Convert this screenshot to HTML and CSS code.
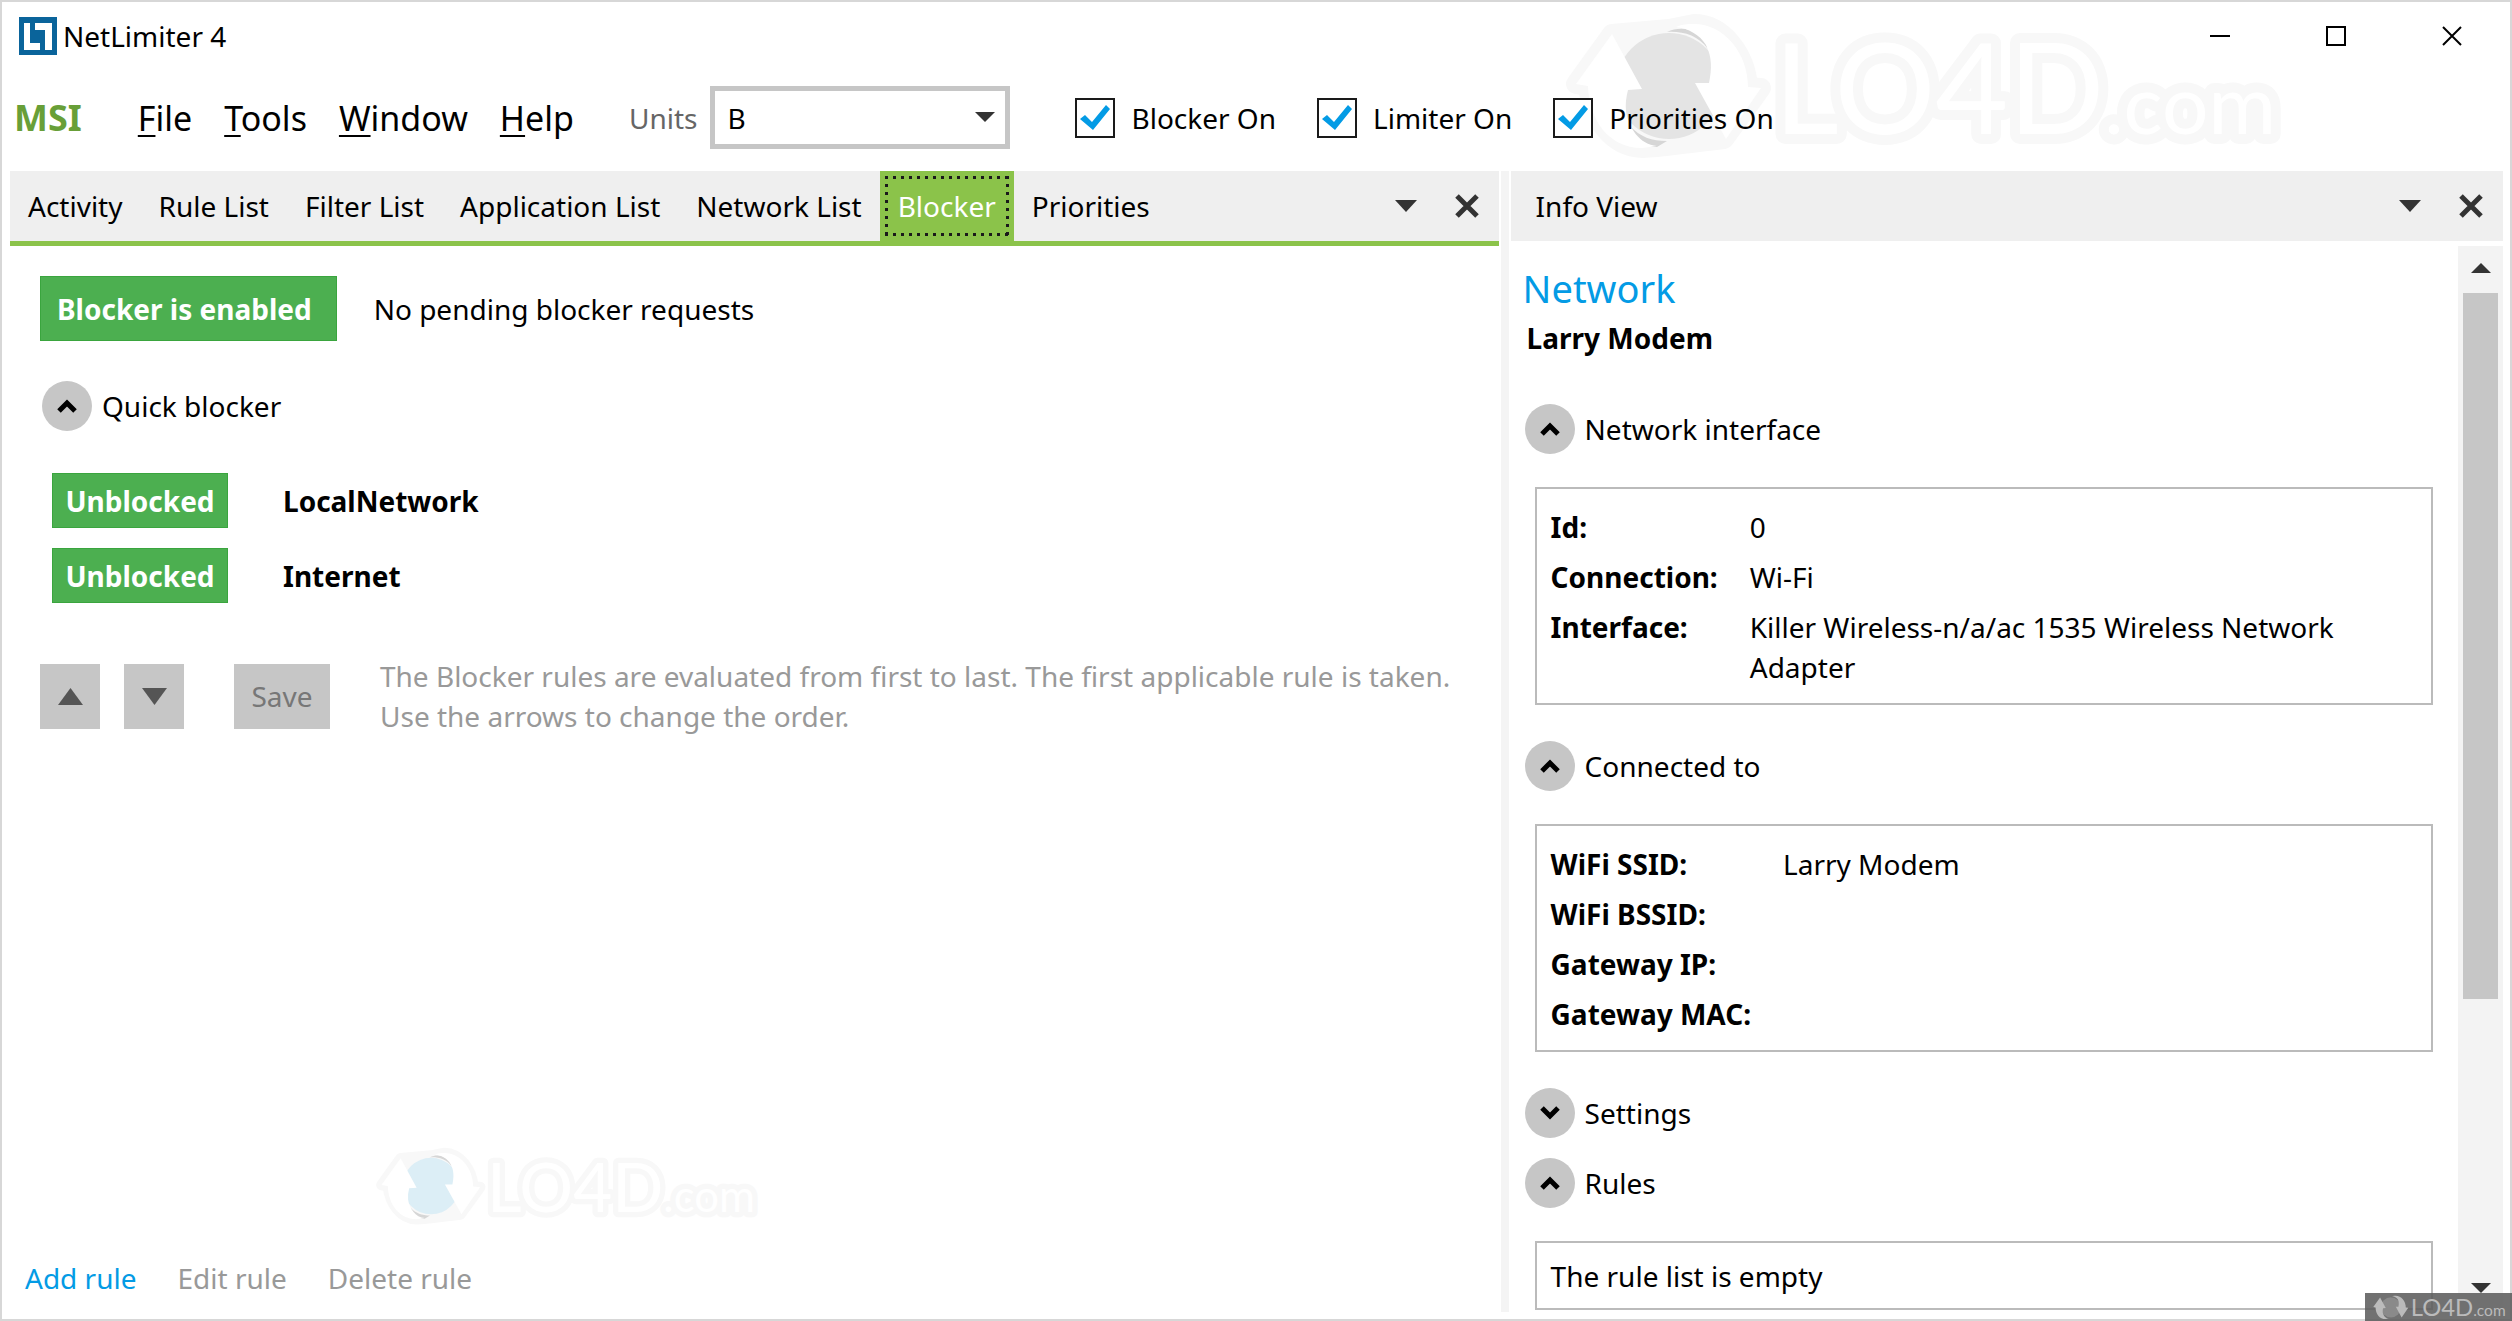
FILE: index.html
```
<!DOCTYPE html>
<html lang="en">
<head>
<meta charset="utf-8">
<meta name="viewport" content="width=device-width, initial-scale=1">
<title>NetLimiter 4</title>
<link rel="stylesheet" href="styles.css">
</head>
<body>
<svg class="defs" aria-hidden="true">
  <symbol id="arrows" viewBox="0 0 740 146" overflow="visible">
    <path class="halo" d="M48 23 12 73 24 75C28 108 48 136 78 137L93 136 160 128 197 77 184 76C182 45 160 13 130 13L105 18Z"/>
    <circle class="disc" cx="105" cy="75" r="53"/>
    <path class="shade" d="M103 21C118 14 138 18 144 38 134 24 118 20 103 21ZM66 115C76 126 88 130 103 130L93 136C80 136 70 128 66 115Z"/>
    <g class="ink">
      <path d="M48 23 12 73 24 75C25 108 44 137 78 137L93 135C76 134 64 116 62 100Q61 90 64 79L78 78Z"/>
      <path d="M112 16C118 13 124 13 130 13 160 13 184 42 184 76L197 77 162 128 131 72 145 72C148 58 148 46 142 34 136 24 124 17 112 16Z"/>
    </g>
  </symbol>
  <symbol id="chevron" viewBox="0 0 50 50"><path d="M17 30 25 22 33 30" fill="none" stroke="#000" stroke-width="5"/></symbol>
  <symbol id="caret" viewBox="0 0 24 12" preserveAspectRatio="none"><path d="M0 0H24L12 12Z"/></symbol>
  <symbol id="cross" viewBox="0 0 24 24"><path d="M2 2 22 22M22 2 2 22" fill="none" stroke="#333" stroke-width="5"/></symbol>
</svg>

<div class="window">
  <svg class="watermark watermark-top" viewBox="0 0 740 146" aria-hidden="true">
    <use href="#arrows" width="740" height="146"/>
    <text x="210" y="123"><tspan class="mark-large">LO4D</tspan><tspan class="mark-small">.com</tspan></text>
  </svg>

  <header class="titlebar">
    <svg class="app-icon" viewBox="0 0 38 38" aria-hidden="true">
      <path fill="#0a649b" d="M0 0H38V38H0Z"/>
      <path fill="#fff" d="M5 6H11V26H21V33H5ZM16 6H33V33H26V13H16Z"/>
    </svg>
    <h1 class="app-name">NetLimiter 4</h1>
    <div class="window-controls">
      <button type="button" aria-label="Minimize"><svg viewBox="0 0 20 20"><path d="M0 10H20"/></svg></button>
      <button type="button" aria-label="Maximize"><svg viewBox="0 0 20 20"><path d="M1 1H19V19H1Z"/></svg></button>
      <button type="button" aria-label="Close"><svg viewBox="0 0 20 20"><path d="M1 1 19 19M19 1 1 19"/></svg></button>
    </div>
  </header>

  <div class="menubar">
    <strong class="host">MSI</strong>
    <nav class="menu">
      <button type="button"><u>F</u>ile</button>
      <button type="button"><u>T</u>ools</button>
      <button type="button"><u>W</u>indow</button>
      <button type="button"><u>H</u>elp</button>
    </nav>
    <div class="units">
      <label for="units">Units</label>
      <span class="select-wrap">
        <select id="units"><option>B</option></select>
        <svg class="select-caret" aria-hidden="true"><use href="#caret"/></svg>
      </span>
    </div>
    <div class="toggles">
      <label><input type="checkbox" checked>Blocker On</label>
      <label><input type="checkbox" checked>Limiter On</label>
      <label><input type="checkbox" checked>Priorities On</label>
    </div>
  </div>

  <main class="workspace">
    <section class="pane pane-main">
      <div class="pane-header tabs-header">
        <div class="tabs" role="tablist">
          <button type="button" role="tab">Activity</button>
          <button type="button" role="tab">Rule List</button>
          <button type="button" role="tab">Filter List</button>
          <button type="button" role="tab">Application List</button>
          <button type="button" role="tab">Network List</button>
          <button type="button" role="tab" aria-selected="true">Blocker</button>
          <button type="button" role="tab">Priorities</button>
        </div>
        <div class="pane-tools">
          <button type="button" aria-label="Tab list"><svg class="caret"><use href="#caret"/></svg></button>
          <button type="button" aria-label="Close tab"><svg class="cross"><use href="#cross"/></svg></button>
        </div>
      </div>
      <div class="blocker">
        <div class="status">
          <button type="button" class="green status-button">Blocker is enabled</button>
          <span>No pending blocker requests</span>
        </div>
        <h2 class="expander">
          <button type="button" aria-expanded="true"><svg><use href="#chevron"/></svg>Quick blocker</button>
        </h2>
        <ul class="zones">
          <li><button type="button" class="green">Unblocked</button><strong>LocalNetwork</strong></li>
          <li><button type="button" class="green">Unblocked</button><strong>Internet</strong></li>
        </ul>
        <div class="order">
          <button type="button" class="gray arrow" aria-label="Move up"><svg class="up"><use href="#caret"/></svg></button>
          <button type="button" class="gray arrow" aria-label="Move down"><svg><use href="#caret"/></svg></button>
          <button type="button" class="gray save" disabled>Save</button>
          <p>The Blocker rules are evaluated from first to last. The first applicable rule is taken.<br>Use the arrows to change the order.</p>
        </div>
      </div>
      <svg class="watermark watermark-pane" viewBox="0 0 740 146" aria-hidden="true">
        <use href="#arrows" width="740" height="146"/>
        <text x="210" y="123"><tspan class="mark-large">LO4D</tspan><tspan class="mark-small">.com</tspan></text>
      </svg>
      <footer class="rule-actions">
        <button type="button">Add rule</button>
        <button type="button" disabled>Edit rule</button>
        <button type="button" disabled>Delete rule</button>
      </footer>
    </section>

    <div class="splitter" role="separator"></div>

    <aside class="pane pane-info">
      <div class="pane-header">
        <h2 class="pane-title">Info View</h2>
        <div class="pane-tools">
          <button type="button" aria-label="View list"><svg class="caret"><use href="#caret"/></svg></button>
          <button type="button" aria-label="Close view"><svg class="cross"><use href="#cross"/></svg></button>
        </div>
      </div>
      <div class="info-body">
        <div class="info">
          <h2 class="info-kind">Network</h2>
          <h3 class="info-name">Larry Modem</h3>

          <h3 class="expander"><button type="button" aria-expanded="true"><svg><use href="#chevron"/></svg>Network interface</button></h3>
          <dl class="box">
            <dt>Id:</dt><dd>0</dd>
            <dt>Connection:</dt><dd>Wi-Fi</dd>
            <dt>Interface:</dt><dd>Killer Wireless-n/a/ac 1535 Wireless Network Adapter</dd>
          </dl>

          <h3 class="expander"><button type="button" aria-expanded="true"><svg><use href="#chevron"/></svg>Connected to</button></h3>
          <dl class="box">
            <dt>WiFi SSID:</dt><dd>Larry Modem</dd>
            <dt>WiFi BSSID:</dt><dd></dd>
            <dt>Gateway IP:</dt><dd></dd>
            <dt>Gateway MAC:</dt><dd></dd>
          </dl>

          <h3 class="expander"><button type="button" aria-expanded="false"><svg><use href="#chevron"/></svg>Settings</button></h3>
          <h3 class="expander"><button type="button" aria-expanded="true"><svg><use href="#chevron"/></svg>Rules</button></h3>
          <p class="box empty">The rule list is empty</p>
        </div>
        <div class="scrollbar" aria-hidden="true">
          <svg class="up"><use href="#caret"/></svg>
          <div class="track"><div class="thumb"></div></div>
          <svg><use href="#caret"/></svg>
        </div>
      </div>
    </aside>
  </main>

  <div class="badge" aria-hidden="true">
    <svg class="watermark" viewBox="0 0 740 146">
      <use href="#arrows" width="740" height="146"/>
      <text x="210" y="123"><tspan class="mark-large">LO4D</tspan><tspan class="mark-small">.com</tspan></text>
    </svg>
  </div>
</div>
</body>
</html>
```
FILE: styles.css
```
* { box-sizing: border-box; }

body {
  margin: 0;
  background: #fff;
  color: #000;
  font: 28px/40px "Noto Sans", "Open Sans", sans-serif;
}

h1, h2, h3, p, ul, dl, dd { margin: 0; padding: 0; font-size: 28px; font-weight: 400; }
ul { list-style: none; }
button, select { font: inherit; color: inherit; }
button { margin: 0; padding: 0; border: 0; background: none; }
svg { display: block; flex: none; }
.defs { position: absolute; width: 0; height: 0; }

.window {
  position: relative;
  display: flex;
  flex-direction: column;
  min-height: 100vh;
  border: 2px solid #d7d7d7;
}

/* Title bar */
.titlebar { position: relative; display: flex; align-items: center; height: 68px; padding-left: 17px; }
.app-icon { width: 38px; height: 38px; }
.app-name { flex: 1; padding-left: 6px; }
.window-controls { display: flex; align-self: stretch; }
.window-controls button { display: flex; align-items: center; justify-content: center; width: 116px; }
.window-controls svg { width: 20px; height: 20px; fill: none; stroke: #000; stroke-width: 2; }

/* Menu bar */
.menubar { position: relative; display: flex; align-items: center; height: 95px; margin-bottom: 6px; padding-left: 12px; }
.host { color: #689f38; font-size: 36px; }
.menu { display: flex; gap: 32px; padding-left: 56px; font-size: 34px; }
.menu u { text-decoration-thickness: 2px; text-underline-offset: 4px; text-decoration-skip-ink: none; }
.units { display: flex; align-items: center; gap: 13px; padding-left: 55px; color: #666; }
.select-wrap { position: relative; }
.select-wrap select {
  display: block;
  width: 300px;
  height: 63px;
  padding: 0 12px;
  border: 5px solid #c6c6c6;
  border-radius: 0;
  background: #fff;
  color: #000;
  appearance: none;
}
.select-caret { position: absolute; top: 26px; right: 15px; width: 20px; height: 10px; fill: #333; pointer-events: none; }
.toggles { display: flex; gap: 41px; padding-left: 65px; }
.toggles label { display: flex; align-items: center; gap: 16px; }
.toggles input {
  width: 40px;
  height: 40px;
  margin: 0;
  border: 2px solid #1a1a1a;
  appearance: none;
}
.toggles input:checked {
  background: #fff url("data:image/svg+xml,%3Csvg xmlns='http://www.w3.org/2000/svg' viewBox='0 0 40 40'%3E%3Cpath fill='%23039be5' d='M5 21 10 17 17 24 31 7 35 11 18 32Z'/%3E%3C/svg%3E") border-box;
}

/* Panes */
.workspace { flex: 1; display: flex; gap: 2px; padding: 0 7px 7px 8px; }
.pane { display: flex; flex-direction: column; min-width: 0; }
.pane-main { position: relative; flex: 3 1 0; }
.pane-info { flex: 2 1 0; }
.splitter { width: 8px; background: #f4f4f4; }
.pane-header { display: flex; justify-content: space-between; height: 70px; background: #efefef; }
.tabs-header { height: 75px; border-bottom: 5px solid #8bc34a; }
.tabs { display: flex; }
.tabs button { padding: 0 18px; }
.tabs button[aria-selected="true"] { position: relative; background: #8bc34a; color: #fff; }
.tabs button[aria-selected="true"]::after {
  content: "";
  position: absolute;
  inset: 5px;
  --dots: #1a1a1a 0 3px, transparent 3px 8px;
  background:
    repeating-linear-gradient(90deg, var(--dots)) top / 100% 3px no-repeat,
    repeating-linear-gradient(90deg, var(--dots)) bottom / 100% 3px no-repeat,
    repeating-linear-gradient(var(--dots)) left / 3px 100% no-repeat,
    repeating-linear-gradient(var(--dots)) right / 3px 100% no-repeat;
}
.pane-title { padding: 15px 25px; }
.pane-tools { display: flex; align-items: center; gap: 38px; padding-right: 20px; }
.caret { width: 22px; height: 12px; fill: #333; }
.cross { width: 24px; height: 24px; }

/* Blocker tab */
.blocker { flex: 1; padding: 30px 30px 0; }
.green { border: 1px solid #3aa53e; background: #4caf50; color: #fff; font-weight: 700; }
.status { display: flex; align-items: center; gap: 37px; }
.status-button { height: 65px; padding: 0 24px 0 16px; }
.expander button { display: flex; align-items: center; gap: 10px; }
.expander svg { width: 50px; height: 50px; border-radius: 50%; background: #c6c6c6; }
.expander [aria-expanded="false"] svg { transform: rotate(180deg); }
.blocker .expander { margin: 40px 0 42px 2px; }
.zones { display: grid; gap: 20px; padding-left: 12px; }
.zones li { display: flex; align-items: center; gap: 55px; }
.zones button { width: 176px; height: 55px; }
.order { display: flex; align-items: center; margin-top: 53px; color: #999; }
.gray { height: 65px; background: #c6c6c6; color: #777; }
.arrow { display: flex; align-items: center; justify-content: center; width: 60px; margin-right: 24px; }
.arrow svg { width: 25px; height: 17px; fill: #555; }
.up { transform: scaleY(-1); }
.save { width: 96px; margin: 0 50px 0 26px; }
.rule-actions { display: flex; gap: 41px; padding: 0 15px 14px; color: #039be5; }
.rule-actions :disabled { color: #999; }

/* Info view */
.info-body { flex: 1; display: flex; margin-top: 5px; }
.info { flex: 1; padding: 17px 25px 2px 14px; }
.info-kind { margin-left: -2px; color: #039be5; font-size: 38px; line-height: 50px; }
.info-name { padding-left: 2px; font-weight: 700; line-height: 50px; }
.info .expander { margin-top: 36px; }
.info-name + .expander { margin-top: 41px; }
.info .expander + .expander { margin-top: 20px; }
.box { margin: 33px 0 0 10px; padding: 18px 14px 16px; border: 2px solid #bbb; }
dl.box { display: grid; grid-template-columns: auto 1fr; gap: 10px 32px; }
dt { font-weight: 700; }
.empty { padding: 13px 14px 12px; }
.scrollbar { display: flex; flex-direction: column; align-items: center; width: 45px; padding: 17px 0 19px; background: #f3f3f3; }
.scrollbar svg { width: 20px; height: 10px; fill: #333; }
.track { flex: 1; width: 35px; margin: 20px 0 10px; }
.thumb { height: 72%; background: #c6c6c6; }

/* Watermarks */
.watermark { --halo: #f8f8f8; --disc: #e4e4e4; --shade: #d6d6d6; --ink: #fff; overflow: visible; pointer-events: none; }
.halo { fill: var(--halo); stroke: var(--halo); stroke-width: 20px; stroke-linejoin: round; }
.disc { fill: var(--disc); }
.shade { fill: var(--shade); }
.ink { fill: var(--ink); }
.watermark text { fill: var(--ink); font-family: Lato, sans-serif; paint-order: stroke; stroke: var(--halo); stroke-width: 20px; stroke-linejoin: round; }
.mark-large { font-size: 126px; }
.mark-small { font-size: 82px; }
.watermark-top { position: absolute; top: 9px; left: 62.3%; width: 740px; height: 146px; }
.watermark-pane { --disc: #dceef6; position: absolute; bottom: 88px; left: 24.5%; width: 395px; height: 78px; }
.badge { position: absolute; right: -2px; bottom: -2px; padding: 0 1px 0 6px; background: rgba(90, 90, 90, 0.86); }
.badge .watermark { --halo: none; --disc: #8a8a8a; --shade: #777; --ink: #bbb; width: 140px; height: 28px; }
```
